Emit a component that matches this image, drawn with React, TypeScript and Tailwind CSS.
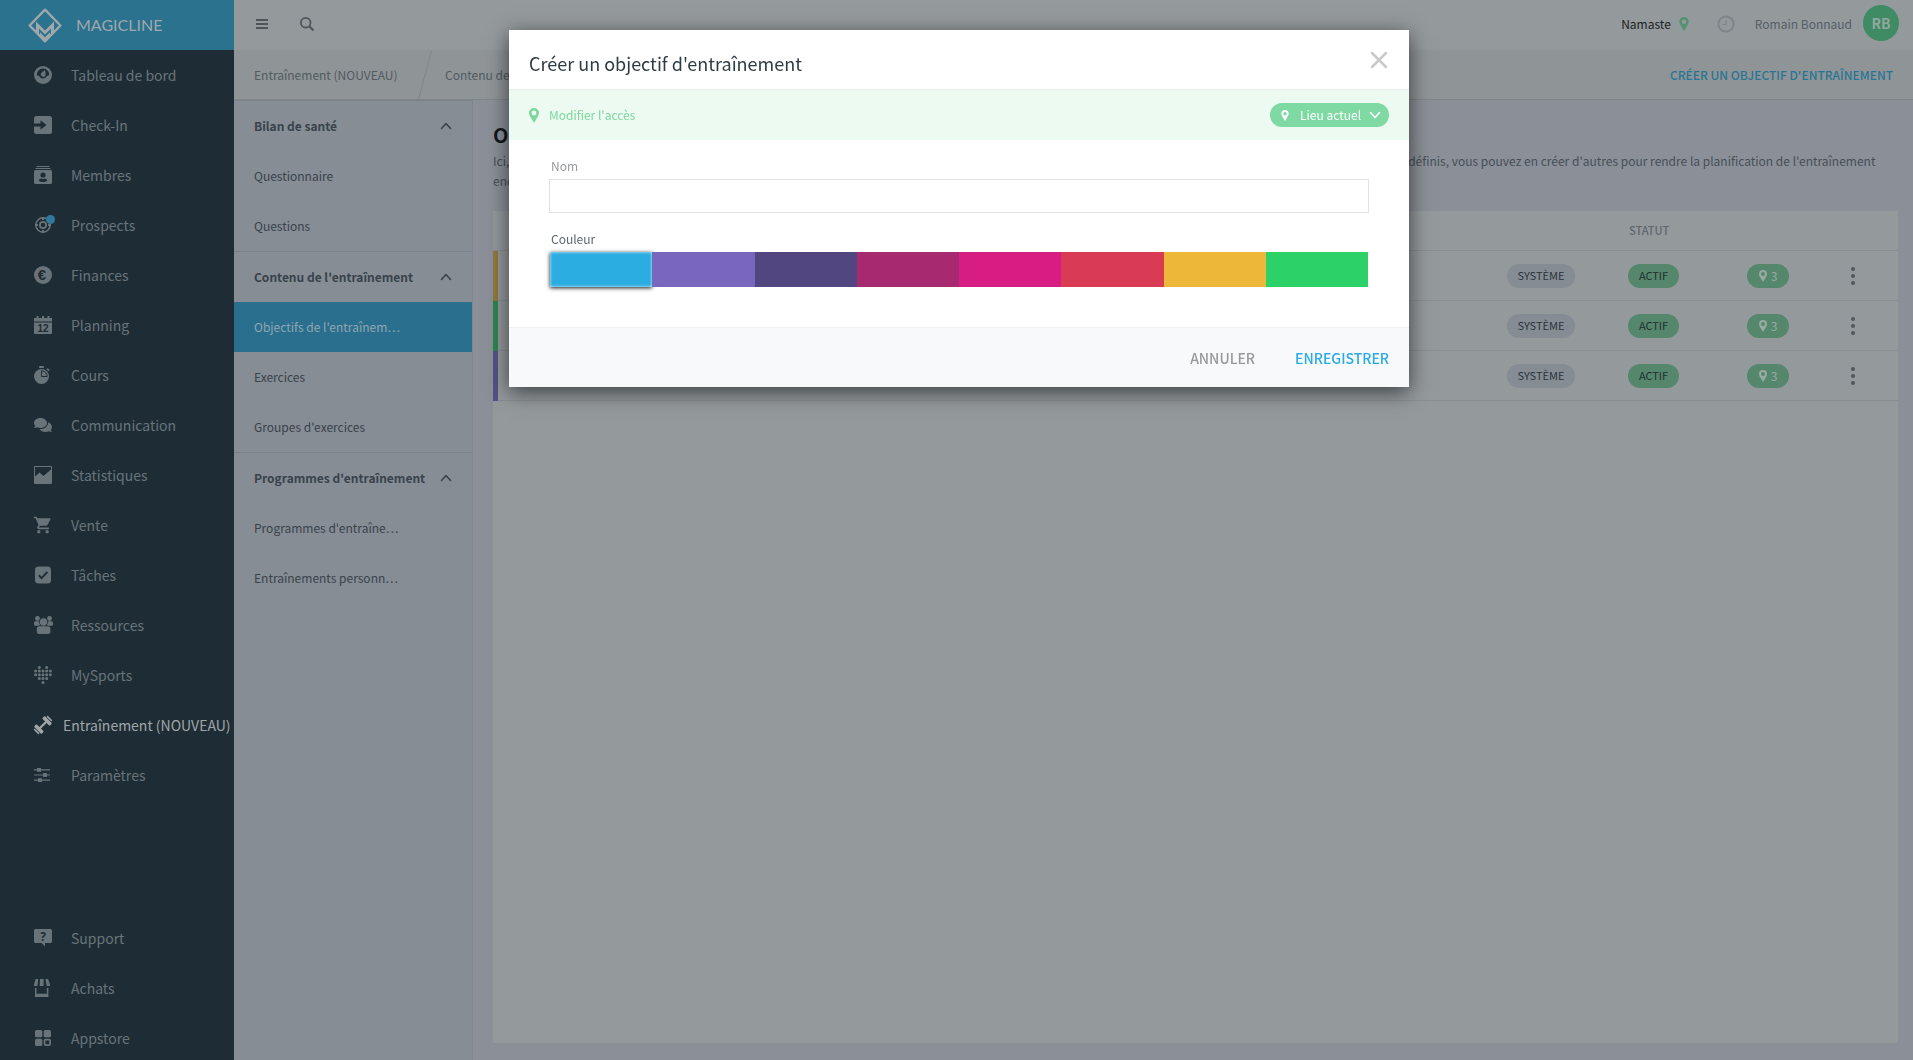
import type { ReactNode } from "react";
import { MdShoppingCart } from "react-icons/md";
import { FaComments } from "react-icons/fa";

const DARK = "#1e2d35";

function Icon({ children }: { children: ReactNode }) {
  return (
    <svg viewBox="0 0 18 18" className="size-[18px] overflow-visible" fill="currentColor" aria-hidden="true">
      {children}
    </svg>
  );
}

function Pin({ className }: { className: string }) {
  return (
    <svg viewBox="0 0 10 15" className={className} fill="currentColor" fillRule="evenodd" aria-hidden="true">
      <path d="M5 0a5 5 0 0 0-5 5c0 1.3.5 2.400 1 3.300L5 15l4-6.700c.5-.9 1-2 1-3.300a5 5 0 0 0-5-5Zm0 2.600a2.400 2.400 0 1 1 0 4.800 2.400 2.400 0 0 1 0-4.800Z" />
    </svg>
  );
}

function Chevron({ up, className }: { up?: boolean; className: string }) {
  return (
    <svg viewBox="0 0 12 8" className={className} fill="none" stroke="currentColor" strokeWidth="1.600" strokeLinecap="round" strokeLinejoin="round" aria-hidden="true">
      <path d={up ? "M1.500 6.500 6 1.500l4.500 5" : "M1.500 1.500 6 6.500l4.500-5"} />
    </svg>
  );
}

const heart: [number, number][] = [
  [5.3, 1.6], [12.7, 1.6],
  ...[5, 8.8].flatMap((y) => [1.6, 5.3, 9, 12.7, 16.4].map((x) => [x, y] as [number, number])),
  [5.3, 12.6], [9, 12.6], [12.7, 12.6], [9, 16.4],
];

const mainNav: { label: string; icon: ReactNode; active?: boolean; dot?: boolean }[] = [
  {
    label: "Tableau de bord",
    icon: (
      <Icon>
        <circle cx="9" cy="9" r="9" />
        <path d="M2.900 9.800a6.200 6.200 0 1 1 12.200 0c-.9-.4-1.900-.3-2.600.6a4 4 0 0 1-7 0c-.7-.9-1.700-1-2.600-.6Z" fill={DARK} />
        <path d="M10.600 4c1 2.200 1.500 4.200.7 5.700a2.500 2.500 0 0 1-4.500-2c.8-1.600 2.800-2.200 3.800-3.700Z" />
      </Icon>
    ),
  },
  {
    label: "Check-In",
    icon: (
      <Icon>
        <rect width="18" height="18" rx="2.500" />
        <path d="M0 7.500h6.500V4.200L12.500 9l-6 4.800v-3.300H0Z" fill={DARK} />
      </Icon>
    ),
  },
  {
    label: "Membres",
    icon: (
      <Icon>
        <rect x="2.500" y="0" width="13" height="1" />
        <rect x="1.500" y="2" width="15" height="1" />
        <rect y="4" width="18" height="14" rx="1.500" />
        <circle cx="9" cy="9" r="2.600" fill={DARK} />
        <path d="M5 14.500c0-1.200 1.200-2.100 2.200-2.100.6.4 1.200.5 1.800.5s1.200-.1 1.800-.5c1 0 2.200.9 2.200 2.100 0 .9-1.700 1.500-4 1.500s-4-.6-4-1.500Z" fill={DARK} />
      </Icon>
    ),
  },
  {
    label: "Prospects",
    dot: true,
    icon: (
      <Icon>
        <g fill="none" stroke="currentColor">
          <circle cx="9" cy="9" r="7.200" strokeWidth="1.500" />
          <circle cx="9" cy="9" r="3.100" strokeWidth="1.800" />
          <path d="M9 1v3M9 14v3M1 9h3M14 9h3" strokeWidth="2" />
        </g>
      </Icon>
    ),
  },
  {
    label: "Finances",
    icon: (
      <Icon>
        <circle cx="9" cy="9" r="9" />
        <text x="8" y="14" textAnchor="middle" fill={DARK} className="font-['Liberation_Sans'] text-[15px] font-bold">€</text>
      </Icon>
    ),
  },
  {
    label: "Planning",
    icon: (
      <Icon>
        <path d="M0 5.500V2h2.500V0h2v2H8V0h2v2h3.500V0h2v2H18v3.500ZM0 6.500h18V17a1 1 0 0 1-1 1H1a1 1 0 0 1-1-1Z" />
        <text x="9" y="15.500" textAnchor="middle" fill={DARK} className="font-['Liberation_Sans'] text-[10px] font-bold">12</text>
      </Icon>
    ),
  },
  {
    label: "Cours",
    icon: (
      <Icon>
        <circle cx="7.500" cy="10.500" r="7.500" />
        <rect x="5" y="0" width="5" height="2" rx=".8" />
        <path d="M12.500 3.200 13.700 2l2 2-1.200 1.200Z" />
        <path d="M7.500 4.800a5.700 5.700 0 0 1 5.700 5.700H7.500Z" fill="currentColor" stroke={DARK} strokeWidth="1" />
      </Icon>
    ),
  },
  { label: "Communication", icon: <FaComments className="size-[18px]" /> },
  {
    label: "Statistiques",
    icon: (
      <Icon>
        <path fillRule="evenodd" d="M1 0h16a1 1 0 0 1 1 1v16a1 1 0 0 1-1 1H1a1 1 0 0 1-1-1V1a1 1 0 0 1 1-1Zm0 1v9.500L5.500 6.500l4 3.500L17 3.500V1Z" />
      </Icon>
    ),
  },
  { label: "Vente", icon: <MdShoppingCart className="-m-px size-5" /> },
  {
    label: "Tâches",
    icon: (
      <Icon>
        <rect x="1" y=".5" width="16" height="17" rx="3.500" />
        <path d="m4.800 9.200 2.800 2.900 5.800-6.200" fill="none" stroke={DARK} strokeWidth="2" />
      </Icon>
    ),
  },
  {
    label: "Ressources",
    icon: (
      <Icon>
        <circle cx="3.500" cy="2.500" r="2.400" />
        <circle cx="15.500" cy="2.500" r="2.400" />
        <rect x="0" y="5.300" width="6" height="4.400" rx="1.500" />
        <rect x="13" y="5.300" width="6" height="4.400" rx="1.500" />
        <circle cx="9.500" cy="6" r="4.200" stroke={DARK} strokeWidth=".8" />
        <rect x="2.800" y="10.200" width="13.600" height="7.800" rx="2.500" />
      </Icon>
    ),
  },
  {
    label: "MySports",
    icon: (
      <Icon>
        {heart.map(([x, y]) => (
          <circle key={`${x}-${y}`} cx={x} cy={y} r="1.500" />
        ))}
      </Icon>
    ),
  },
  {
    label: "Entraînement (NOUVEAU)",
    active: true,
    icon: (
      <Icon>
        <g transform="rotate(-45 9 9)">
          <rect x="4" y="7.900" width="10" height="2.200" />
          <rect x="1.400" y="3.700" width="3.600" height="10.600" rx="1" />
          <rect x="13" y="3.700" width="3.600" height="10.600" rx="1" />
          <rect x="-.9" y="5.500" width="1.600" height="7" rx=".7" />
          <rect x="17.300" y="5.500" width="1.600" height="7" rx=".7" />
        </g>
      </Icon>
    ),
  },
  {
    label: "Paramètres",
    icon: (
      <Icon>
        <path d="M0 3.300h16v1.200H0ZM0 8.400h16v1.200H0ZM0 13.500h16v1.200H0Z" />
        <rect x="3" y="2" width="4" height="3.800" />
        <rect x="9" y="7.100" width="4" height="3.800" />
        <rect x="4" y="12.200" width="4" height="3.800" />
      </Icon>
    ),
  },
];

const footNav: { label: string; icon: ReactNode }[] = [
  {
    label: "Support",
    icon: (
      <Icon>
        <path d="M1.500 0h15A1.500 1.500 0 0 1 18 1.500v11a1.500 1.500 0 0 1-1.500 1.500H11v3.500L7.500 14h-6A1.500 1.500 0 0 1 0 12.500v-11A1.500 1.500 0 0 1 1.500 0Z" />
        <text x="9" y="11.500" textAnchor="middle" fill={DARK} className="font-['Noto_Sans'] text-[12px] font-bold">?</text>
      </Icon>
    ),
  },
  {
    label: "Achats",
    icon: (
      <Icon>
        <path d="M1.600 0h2.700L3.400 7H0V5.500ZM6 0h3.600v7H5.700ZM11.400 0h2.700L16 5.500V7h-3.300Z" />
        <path d="M1 9h1.500v5.800h10.300V9h1.600v9H1Z" />
      </Icon>
    ),
  },
  {
    label: "Appstore",
    icon: (
      <Icon>
        <rect x="1" y="1" width="7.300" height="7.300" rx="1.500" />
        <rect x="9.700" y="1" width="7.300" height="7.300" rx="1.500" />
        <rect x="1" y="9.700" width="7.300" height="7.300" rx="1.500" />
        <rect x="10.600" y="10.600" width="5.500" height="5.500" rx="1" fill="none" stroke="currentColor" strokeWidth="1.800" />
      </Icon>
    ),
  },
];

const groups: { title: string; items: { label: string; active?: boolean }[] }[] = [
  { title: "Bilan de santé", items: [{ label: "Questionnaire" }, { label: "Questions" }] },
  {
    title: "Contenu de l'entraînement",
    items: [{ label: "Objectifs de l'entraînem…", active: true }, { label: "Exercices" }, { label: "Groupes d'exercices" }],
  },
  {
    title: "Programmes d'entraînement",
    items: [{ label: "Programmes d'entraîne…" }, { label: "Entraînements personn…" }],
  },
];

const rows = ["bg-[#8f7a3c]", "bg-[#2e8550]", "bg-[#545284]"];

const swatches: { name: string; color: string }[] = [
  { name: "Bleu", color: "bg-[#2bade2]" },
  { name: "Violet", color: "bg-[#7867bc]" },
  { name: "Indigo", color: "bg-[#51467f]" },
  { name: "Prune", color: "bg-[#a72a70]" },
  { name: "Rose", color: "bg-[#d71c83]" },
  { name: "Rouge", color: "bg-[#d93a54]" },
  { name: "Jaune", color: "bg-[#edb83a]" },
  { name: "Vert", color: "bg-[#2cd167]" },
];

function NavLink({ label, icon, active, dot }: { label: string; icon: ReactNode; active?: boolean; dot?: boolean }) {
  return (
    <a
      href="#"
      className={
        active
          ? "flex h-[50px] items-center gap-[11px] pl-[34px] whitespace-nowrap text-[#a0a5a8]"
          : "flex h-[50px] items-center gap-[19px] pl-[34px] whitespace-nowrap text-[#69737a]"
      }
    >
      <span className="relative shrink-0">
        {icon}
        {dot && <span className="absolute -top-px -right-[3px] size-[9px] rounded-full bg-[#31799a]" />}
      </span>
      {label}
    </a>
  );
}

function Sidebar() {
  return (
    <aside className="flex h-screen w-[234px] shrink-0 flex-col overflow-hidden bg-[#1e2d35] text-sm">
      <a href="#" className="flex h-[50px] shrink-0 items-center gap-[14px] bg-[#2a728e] pl-7 text-[#a0a8ac]">
        <svg viewBox="0 0 34 35" className="h-[35px] w-[34px]" fill="currentColor" role="img" aria-label="Logo">
          <path d="M17 1.600 32.400 17.500 17 33.400 1.600 17.500Z" fill="none" stroke="currentColor" strokeWidth="2.300" strokeLinejoin="round" />
          <path d="M8 13.500 17 22.500 26 13.500V24l-3 3v-6.500L17 26.500 11 20.500V27l-3-3Z" />
          <path d="m12 27.500 5 5 5-5v-3.300l-5 5-5-5Z" />
        </svg>
        <span className="font-['Lato'] text-base leading-none">MAGICLINE</span>
      </a>
      <nav aria-label="Navigation principale">
        {mainNav.map((n) => (
          <NavLink key={n.label} {...n} />
        ))}
      </nav>
      <nav aria-label="Outils" className="mt-auto -mb-[3px]">
        {footNav.map((n) => (
          <NavLink key={n.label} {...n} />
        ))}
      </nav>
    </aside>
  );
}

function TopBar() {
  return (
    <header className="flex h-[50px] items-center bg-[#94999c] pr-[14px] pb-[2px] pl-[22px]">
      <button type="button" aria-label="Menu" className="flex w-3 flex-col gap-[2px]">
        <span className="h-[2px] w-full bg-[#4d555b]" />
        <span className="h-[2px] w-full bg-[#4d555b]" />
        <span className="h-[2px] w-full bg-[#4d555b]" />
      </button>
      <button type="button" aria-label="Rechercher" className="ml-8 text-[#4d555b]">
        <svg viewBox="0 0 14 14" className="size-[14px]" fill="none" stroke="currentColor" strokeWidth="1.800" aria-hidden="true">
          <circle cx="5.700" cy="5.700" r="4.800" />
          <path d="m9.200 9.200 4.200 4.200" strokeWidth="2.200" />
        </svg>
      </button>
      <div className="ml-auto flex h-9 items-center">
        <button type="button" className="flex items-center gap-2 text-[#1a1f23]">
          Namaste
          <Pin className="h-[14px] w-[10px] text-[#549271]" />
        </button>
        <svg viewBox="0 0 18 18" className="ml-7 size-[18px] text-[#7e8488]" fill="none" stroke="currentColor" role="img" aria-label="Pointage">
          <circle cx="9" cy="9" r="7.600" strokeWidth="2" />
          <path d="M9 5v4.500H5.500" strokeWidth="1.200" />
        </svg>
        <span className="ml-5 text-[#545f67]">Romain Bonnaud</span>
        <span className="mb-[2px] ml-[11px] flex size-9 items-center justify-center rounded-full bg-[#3f8b64] text-sm font-bold text-[#92a89e]">RB</span>
      </div>
    </header>
  );
}

function BreadcrumbBar() {
  return (
    <div className="flex h-[50px] items-center border-b border-[#7f868a] bg-[#8f9497] pr-5 pl-5 text-[#505b62]">
      <nav aria-label="Fil d'Ariane" className="flex items-center">
        <a href="#" className="w-[164px]">Entraînement (NOUVEAU)</a>
        <svg viewBox="0 0 14 48" className="h-12 w-[14px] text-[#7f868a]" fill="none" stroke="currentColor" aria-hidden="true">
          <path d="M13.500 0 .5 48" />
        </svg>
        <a href="#" className="ml-[13px]">Contenu de l'entraînement</a>
      </nav>
      <button type="button" className="ml-auto font-medium text-[#2a7493]">CRÉER UN OBJECTIF D'ENTRAÎNEMENT</button>
    </div>
  );
}

function SubNav() {
  return (
    <nav aria-label="Entraînement" className="w-[239px] shrink-0 border-r border-[#7f868d] bg-[#868d94] text-[#39434c]">
      {groups.map((g) => (
        <section key={g.title} className="border-t border-[#7b8289]">
          <h2>
            <button type="button" className="flex h-[50px] w-full items-center justify-between pr-5 pl-5 font-bold">
              {g.title}
              <Chevron up className="h-2 w-3" />
            </button>
          </h2>
          {g.items.map((it) => (
            <a
              key={it.label}
              href="#"
              className={it.active ? "flex h-[50px] items-center bg-[#2a6f8d] pl-5 text-[#8fa6b2]" : "flex h-[50px] items-center pl-5"}
            >
              {it.label}
            </a>
          ))}
        </section>
      ))}
    </nav>
  );
}

function Content() {
  return (
    <main className="flex min-w-0 grow flex-col bg-[#8b9098] pt-[19px] pr-[15px] pb-[17px] pl-5">
      <h1 className="text-xl leading-8 font-bold text-[#12181c]">Objectifs de l'entraînement</h1>
      <p className="leading-5 text-[#464f57]">
        Ici, vous pouvez consulter les objectifs d'entraînement disponibles dans votre établissement et les attribuer à vos membres. En plus des objectifs que nous avons prédéfinis, vous pouvez en créer d'autres pour rendre la planification de l'entraînement encore plus individuelle.
      </p>
      <div className="mt-5 grow bg-[#94999c]">
        <table className="w-full table-fixed border-separate border-spacing-0">
          <thead>
            <tr className="h-10 text-[11px] text-[#60676c]">
              <th className="border-b border-[#888e91]" />
              <th className="w-[69px] border-b border-[#888e91]" />
              <th className="w-[152px] border-b border-[#888e91] pl-[53px] text-left font-medium">STATUT</th>
              <th className="w-20 border-b border-[#888e91]" />
              <th className="w-[90px] border-b border-[#888e91]" />
            </tr>
          </thead>
          <tbody>
            {rows.map((color) => (
              <tr key={color} className="h-[50px] *:border-b *:border-[#888e91] *:p-0 *:first:border-b-0">
                <td>
                  <div className="flex h-[50px]">
                    <span className={`w-[5px] ${color}`} />
                    <span className="grow border-b border-[#888e91]" />
                  </div>
                </td>
                <td>
                  <span className="flex h-6 w-[68px] items-center justify-center rounded-full bg-[#868c94] text-[11px] text-[#29343c]">SYSTÈME</span>
                </td>
                <td>
                  <span className="ml-[52px] flex h-6 w-[51px] items-center justify-center rounded-full bg-[#55876d] text-[11px] text-[#21302f]">ACTIF</span>
                </td>
                <td>
                  <span className="mx-auto flex h-6 w-[42px] items-center justify-center gap-1 rounded-full bg-[#55876d] text-[#98aba2]">
                    <Pin className="h-3 w-2" />3
                  </span>
                </td>
                <td>
                  <button type="button" aria-label="Actions" className="mx-auto flex flex-col items-center gap-[3px]">
                    <span className="size-1 rounded-full bg-[#50585e]" />
                    <span className="size-1 rounded-full bg-[#50585e]" />
                    <span className="size-1 rounded-full bg-[#50585e]" />
                  </button>
                </td>
              </tr>
            ))}
          </tbody>
        </table>
      </div>
    </main>
  );
}

function GoalDialog() {
  return (
    <div className="fixed inset-0 flex items-start justify-center pt-[30px] pl-[5px]">
      <div role="dialog" aria-modal="true" aria-labelledby="dialog-title" className="w-full max-w-[900px] bg-white shadow-[0_5px_20px_rgba(0,0,0,0.6)]">
        <div className="flex h-[59px] items-start justify-between pr-[21px] pl-5">
          <h2 id="dialog-title" className="pt-[19px] text-lg leading-7 text-[#2f3b45]">Créer un objectif d'entraînement</h2>
          <button type="button" aria-label="Fermer" className="mt-[21px] text-[#c9c9c9]">
            <svg viewBox="0 0 18 18" className="size-[18px]" fill="none" stroke="currentColor" strokeWidth="2.500" strokeLinecap="round" aria-hidden="true">
              <path d="m2 2 14 14M16 2 2 16" />
            </svg>
          </button>
        </div>
        <div className="flex h-[51px] items-center border-t border-[#e6f1eb] bg-[#ecfaf1] px-5 text-[#7dd79f]">
          <Pin className="h-[15px] w-[10px]" />
          <span className="ml-[10px]">Modifier l'accès</span>
          <button type="button" className="ml-auto flex h-6 w-[119px] items-center rounded-full bg-[#7fd9a2] pr-2 pl-[11px] text-white">
            <Pin className="h-[11px] w-2" />
            <span className="ml-[11px]">Lieu actuel</span>
            <Chevron className="ml-auto h-2 w-3" />
          </button>
        </div>
        <form className="px-10 pt-4 pb-10">
          <label htmlFor="goal-name" className="block pl-[2px] leading-5 text-[#96999d]">Nom</label>
          <input id="goal-name" type="text" className="mt-[3px] block h-[34px] w-full border border-[#dfe3e5] px-2 outline-none" />
          <fieldset className="mt-4">
            <legend className="pl-[2px] leading-5 text-[#5b666f]">Couleur</legend>
            <div className="mt-[3px] grid h-[35px] grid-cols-8 px-px">
              {swatches.map((s, i) => (
                <input
                  key={s.name}
                  type="radio"
                  name="color"
                  aria-label={s.name}
                  defaultChecked={i === 0}
                  className={`${s.color} h-full w-full cursor-pointer appearance-none checked:shadow-[0_1px_4px_rgba(0,0,0,0.9),inset_0_0_3px_rgba(255,255,255,0.9)]`}
                />
              ))}
            </div>
          </fieldset>
        </form>
        <div className="flex h-[60px] items-center justify-end gap-10 border-t border-[#eff1f2] bg-[#f8f9fb] pt-px pr-5 text-sm font-medium">
          <button type="button" className="text-[#97999d]">ANNULER</button>
          <button type="button" className="text-[#2babe1]">ENREGISTRER</button>
        </div>
      </div>
    </div>
  );
}

export default function App() {
  return (
    <div className="flex h-screen overflow-hidden font-['Noto_Sans_CJK_SC',sans-serif] text-xs">
      <Sidebar />
      <div className="flex min-w-0 grow flex-col">
        <TopBar />
        <BreadcrumbBar />
        <div className="flex grow">
          <SubNav />
          <Content />
        </div>
      </div>
      <GoalDialog />
    </div>
  );
}
